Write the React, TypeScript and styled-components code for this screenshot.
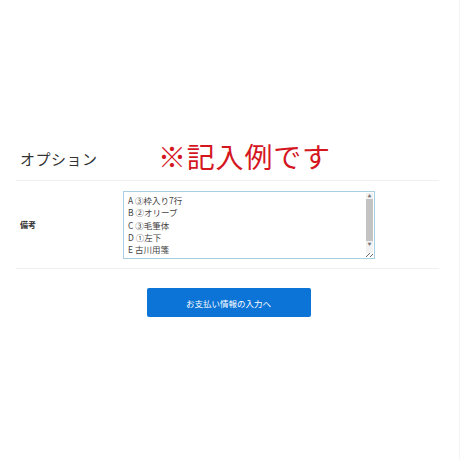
import React from "react";
import styled, { createGlobalStyle } from "styled-components";

const Global = createGlobalStyle`
  html, body {
    margin: 0;
    padding: 0;
    background: #fff;
    font-family: "Noto Sans CJK JP", "Noto Sans", sans-serif;
  }
`;

const note = "A ③枠入り7行\nB ②オリーブ\nC ③毛筆体\nD ①左下\nE 古川用箋\n\n";

const App = () => {
  return (
    <>
      <Global />
      <Page>
        <Head>
          <Title>オプション</Title>
          <Sample>※記入例です</Sample>
        </Head>
        <Row>
          <Label>備考</Label>
          <NoteBox>
            <Note defaultValue={note} />
            {/* classic scrollbar drawn over the textarea edge */}
            <Scroll>
              <Arrow>▲</Arrow>
              <Thumb />
              <Arrow>▼</Arrow>
            </Scroll>
          </NoteBox>
        </Row>
        <Actions>
          <NextButton>お支払い情報の入力へ</NextButton>
        </Actions>
      </Page>
    </>
  );
};

export default App;

const Page = styled.div`
  width: 460px;
  height: 460px;
  box-sizing: border-box;
  padding: 136px 20px 0 16px;
  border-right: 1px solid #f3f5f7;
`;

const Head = styled.div`
  display: flex;
  align-items: center;
  height: 44px;
  padding-left: 4px;
  border-bottom: 1px solid #eef0f2;
`;

const Title = styled.div`
  width: 138px;
  font-size: 15px;
  color: #333;
  letter-spacing: 0.5px;
`;

const Sample = styled.div`
  font-size: 28px;
  color: #d5161e;
  letter-spacing: 0.8px;
  margin-top: -5px;
`;

const Row = styled.div`
  display: flex;
  align-items: center;
  height: 87px;
  padding-left: 4px;
  border-bottom: 1px solid #eef0f2;
`;

const Label = styled.div`
  width: 103px;
  font-size: 8px;
  font-weight: bold;
  color: #333;
`;

const NoteBox = styled.div`
  position: relative;
  width: 252px;
  height: 68px;
  margin-top: 1px;
`;

const Note = styled.textarea`
  display: block;
  width: 252px;
  height: 68px;
  box-sizing: border-box;
  padding: 2px 12px 2px 4px;
  border: 1px solid #a9cfe3;
  font-family: "Noto Sans CJK JP", sans-serif;
  font-size: 8.5px;
  line-height: 12.3px;
  color: #444;
  overflow: hidden;
  resize: both;
  outline: none;
`;

const Scroll = styled.div`
  position: absolute;
  top: 2px;
  right: 2px;
  bottom: 6px;
  width: 7px;
  display: flex;
  flex-direction: column;
  background: #f2f2f2;
`;

const Arrow = styled.div`
  height: 6px;
  font-size: 4px;
  line-height: 6px;
  text-align: center;
  color: #777;
`;

const Thumb = styled.div`
  height: 42px;
  background: #c3c3c3;
`;

const Actions = styled.div`
  display: flex;
  justify-content: center;
  padding-top: 19px;
  padding-left: 2px;
`;

const NextButton = styled.button`
  width: 164px;
  height: 29px;
  border: none;
  border-radius: 2px;
  background: #0b74d6;
  color: #fff;
  font-family: "Noto Sans CJK JP", sans-serif;
  font-size: 8.5px;
`;
